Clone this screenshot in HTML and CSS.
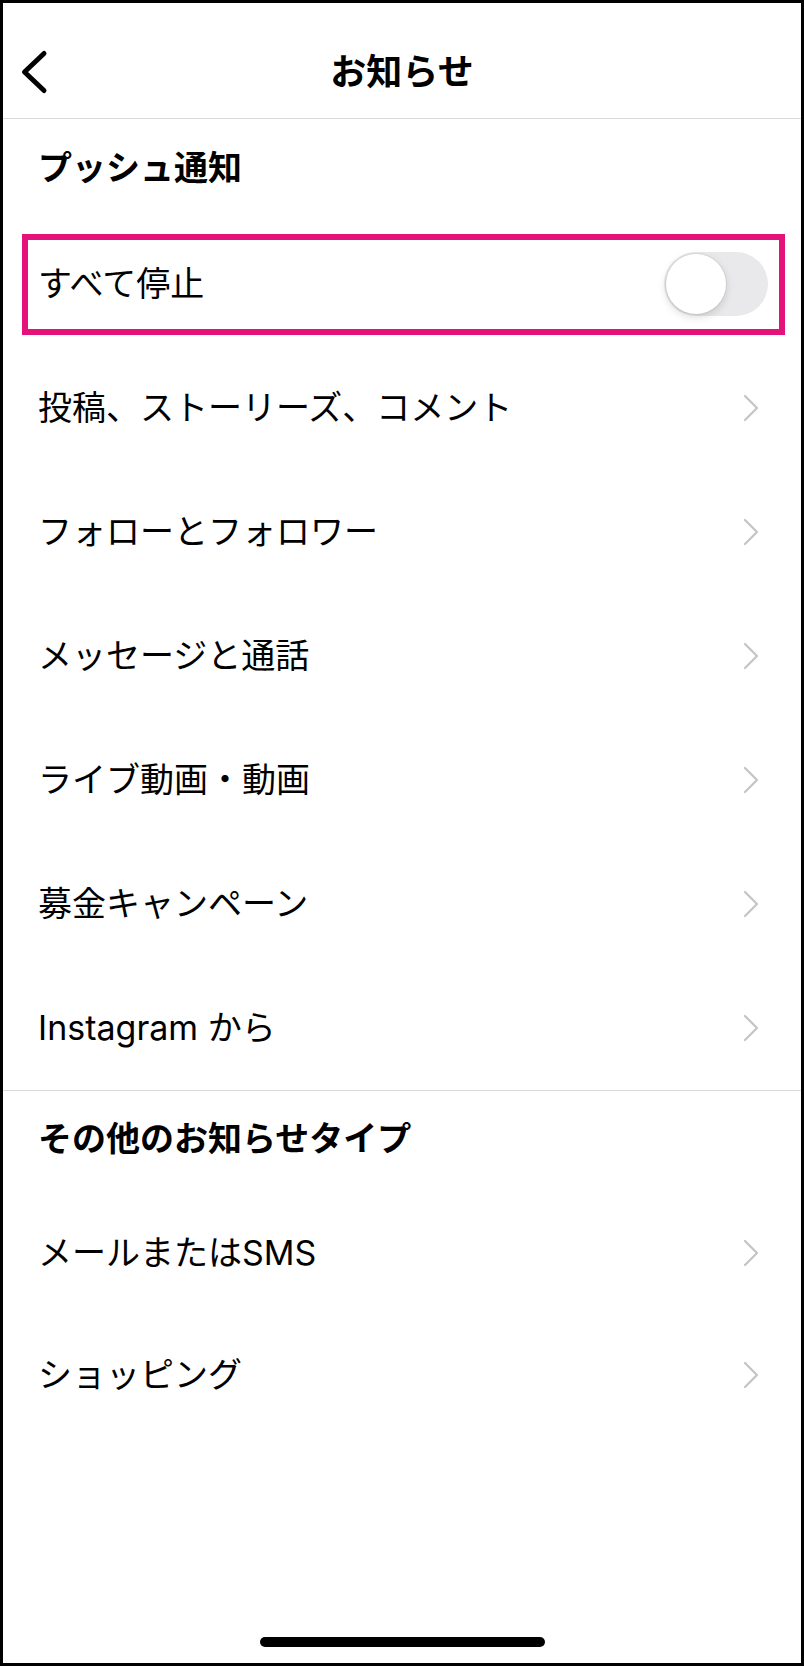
FILE: index.html
```html
<!DOCTYPE html>
<html lang="ja">
<head>
<meta charset="utf-8">
<title>お知らせ</title>
<link rel="stylesheet" href="styles.css">
</head>
<body>
<div class="frame">
  <header class="nav">
    <div class="nav-left">
      <svg class="back" width="30" height="46" viewBox="0 0 30 46" aria-hidden="true">
        <path d="M25 4.5 L5.5 23 L25 41.5" fill="none" stroke="#000" stroke-width="5" stroke-linecap="round" stroke-linejoin="round"/>
      </svg>
    </div>
    <h1 class="nav-title">お知らせ</h1>
    <div class="nav-right"></div>
  </header>

  <section class="section">
    <h2 class="section-title">プッシュ通知</h2>
    <div class="row row-toggle">
      <span class="row-label">すべて停止</span>
      <span class="switch"></span>
      <span class="highlight"></span>
    </div>
    <div class="row"><span class="row-label">投稿、ストーリーズ、コメント</span><svg class="chev" width="16" height="28" viewBox="0 0 16 28"><polyline points="2,2 14,14 2,26" fill="none" stroke="#c4c4c7" stroke-width="2.2" stroke-linecap="round" stroke-linejoin="round"/></svg></div>
    <div class="row"><span class="row-label">フォローとフォロワー</span><svg class="chev" width="16" height="28" viewBox="0 0 16 28"><polyline points="2,2 14,14 2,26" fill="none" stroke="#c4c4c7" stroke-width="2.2" stroke-linecap="round" stroke-linejoin="round"/></svg></div>
    <div class="row"><span class="row-label">メッセージと通話</span><svg class="chev" width="16" height="28" viewBox="0 0 16 28"><polyline points="2,2 14,14 2,26" fill="none" stroke="#c4c4c7" stroke-width="2.2" stroke-linecap="round" stroke-linejoin="round"/></svg></div>
    <div class="row"><span class="row-label">ライブ動画・動画</span><svg class="chev" width="16" height="28" viewBox="0 0 16 28"><polyline points="2,2 14,14 2,26" fill="none" stroke="#c4c4c7" stroke-width="2.2" stroke-linecap="round" stroke-linejoin="round"/></svg></div>
    <div class="row"><span class="row-label">募金キャンペーン</span><svg class="chev" width="16" height="28" viewBox="0 0 16 28"><polyline points="2,2 14,14 2,26" fill="none" stroke="#c4c4c7" stroke-width="2.2" stroke-linecap="round" stroke-linejoin="round"/></svg></div>
    <div class="row"><span class="row-label">Instagram から</span><svg class="chev" width="16" height="28" viewBox="0 0 16 28"><polyline points="2,2 14,14 2,26" fill="none" stroke="#c4c4c7" stroke-width="2.2" stroke-linecap="round" stroke-linejoin="round"/></svg></div>
  </section>

  <section class="section section-other">
    <h2 class="section-title">その他のお知らせタイプ</h2>
    <div class="row row-short"><span class="row-label">メールまたはSMS</span><svg class="chev" width="16" height="28" viewBox="0 0 16 28"><polyline points="2,2 14,14 2,26" fill="none" stroke="#c4c4c7" stroke-width="2.2" stroke-linecap="round" stroke-linejoin="round"/></svg></div>
    <div class="row row-short"><span class="row-label">ショッピング</span><svg class="chev" width="16" height="28" viewBox="0 0 16 28"><polyline points="2,2 14,14 2,26" fill="none" stroke="#c4c4c7" stroke-width="2.2" stroke-linecap="round" stroke-linejoin="round"/></svg></div>
  </section>

  <div class="home-bar"></div>
</div>
</body>
</html>
```

FILE: styles.css
```css
* { box-sizing: border-box; }

html, body {
  margin: 0;
  padding: 0;
  background: #fff;
}

body {
  font-family: "Inter", "Noto Sans CJK JP", sans-serif;
  color: #000;
}

.frame {
  width: 804px;
  height: 1666px;
  border: 3px solid #000;
  background: #fff;
  display: flex;
  flex-direction: column;
}

.nav {
  height: 116px;
  padding-top: 22px;
  border-bottom: 1px solid #dbdbdb;
  display: grid;
  grid-template-columns: 1fr auto 1fr;
  align-items: center;
}

.nav-left {
  display: flex;
  align-items: center;
  padding-left: 16px;
}

.back { display: block; }

.nav-title {
  margin: 0;
  font-size: 36px;
  font-weight: 700;
  line-height: 48px;
  letter-spacing: 0;
}

.section-title {
  margin: 0;
  padding: 25px 35px 30px;
  font-size: 34px;
  font-weight: 700;
  line-height: 48px;
}

.section-other {
  border-top: 1px solid #dbdbdb;
}

.section-other .section-title {
  padding: 24px 35px 29px;
}

.row {
  position: relative;
  height: 124px;
  padding: 0 42px 0 35px;
  display: flex;
  align-items: center;
  justify-content: space-between;
}

.row-short { height: 122px; }

.row-toggle { padding-right: 33px; }

.row-label {
  font-size: 34px;
  font-weight: 400;
  line-height: 48px;
  white-space: nowrap;
}

.chev { display: block; }

.switch {
  position: relative;
  width: 104px;
  height: 64px;
  border-radius: 32px;
  background: #e9e9eb;
}

.switch::after {
  content: "";
  position: absolute;
  left: 2px;
  top: 2px;
  width: 60px;
  height: 60px;
  border-radius: 50%;
  background: #fff;
  box-shadow: 0 3px 8px rgba(0, 0, 0, 0.15), 0 0 0 1px rgba(0, 0, 0, 0.05);
}

.highlight {
  position: absolute;
  left: 19px;
  top: 12px;
  width: 763px;
  height: 101px;
  border: 6px solid #e4137b;
  pointer-events: none;
}

.home-bar {
  margin-top: auto;
  margin-bottom: 16px;
  align-self: center;
  width: 285px;
  height: 10px;
  border-radius: 5px;
  background: #000;
}
```
